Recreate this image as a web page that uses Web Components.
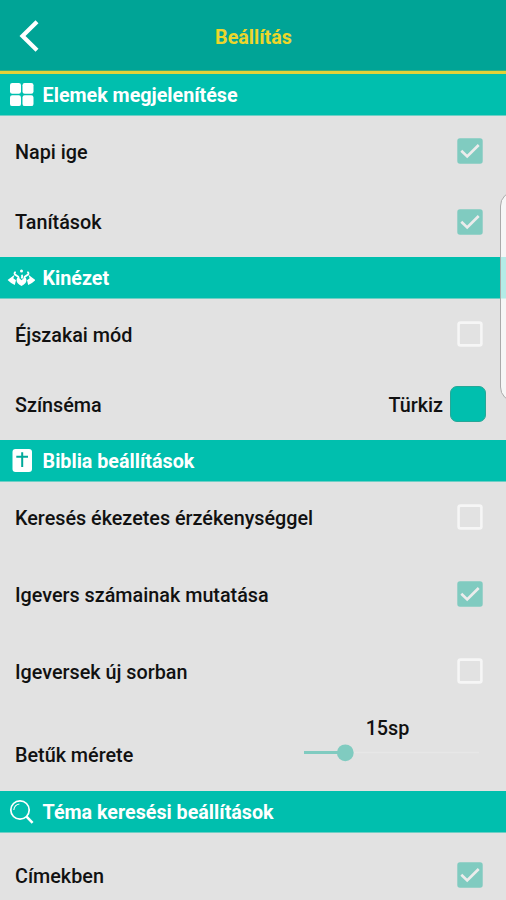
<!DOCTYPE html>
<html lang="hu">
<head>
<meta charset="utf-8">
<title>Beállítás</title>
<style>
html,body{margin:0;height:900px;overflow:hidden;background:#e2e2e2}
</style>
</head>
<body>
<settings-screen></settings-screen>
<script>
function define(name, html) {
  const t = document.createElement('template');
  t.innerHTML = html;
  customElements.define(name, class extends HTMLElement {
    constructor() {
      super();
      this.attachShadow({mode: 'open'}).append(t.content.cloneNode(true));
    }
  });
}

define('app-header', `<style>
:host{display:grid;grid-template-columns:60px 1fr 60px;align-items:center;height:74px;box-sizing:border-box;background:#00a496;border-bottom:3px solid #e2d237;box-shadow:inset 0 -1px #3fae75}
svg{display:block;margin-left:14px}
h1{margin:4px 0 0 1px;font-size:19.7px;line-height:24px;font-weight:700;color:#ecd62b;text-align:center}
</style>
<svg width="30" height="36" viewBox="0 0 30 36"><path d="M23 3.7 8.5 18 23 32.3" fill="none" stroke="#fff" stroke-width="4.2"/></svg>
<h1><slot></slot></h1>`);

define('section-bar', `<style>
:host{display:flex;align-items:center;height:42px;box-sizing:border-box;background:#00bfae;color:#fff;padding-left:7px;gap:7.6px;border-bottom:1px solid #6fcfc5}
.icon{display:flex;width:28px;height:28px;align-items:center;justify-content:center}
h2{margin:0;padding-top:3px;font-size:19.7px;line-height:24px;font-weight:700;white-space:nowrap}
</style>
<span class="icon"><slot name="icon"></slot></span><h2><slot></slot></h2>`);

define('setting-row', `<style>
:host{display:flex;align-items:center;justify-content:space-between;height:70px;box-sizing:border-box;padding:0 23px 0 15px}
:host([tall]){height:84px}
span{font-size:19.77px;line-height:24px;font-weight:500;white-space:nowrap;padding-top:3px}
</style>
<span><slot></slot></span><slot name="control"></slot>`);

define('check-box', `<style>
:host{display:block;width:26px;height:26px}
svg{display:block}
.on{display:none}
:host([checked]) .on{display:block}
:host([checked]) .off{display:none}
</style>
<svg width="26" height="26" viewBox="0 0 26 26">
<rect class="off" x="1.6" y="1.6" width="22.8" height="22.8" rx="2" fill="none" stroke="#f6f6f6" stroke-width="2.6"/>
<g class="on"><rect x=".3" y=".3" width="25.4" height="25.4" rx="2.6" fill="#80cbc0"/><path d="M4.3 12.8 10.2 18.4 21.7 7" fill="none" stroke="#ececec" stroke-width="2.7"/></g>
</svg>`);

define('color-choice', `<style>
:host{display:flex;align-items:center;gap:7px;margin-right:-3px;font-size:19.77px;line-height:24px;font-weight:500}
i{width:36px;height:36px;box-sizing:border-box;border-radius:7px;background:#00bfae;border:1px solid #27a797;position:relative;top:-1px}
b{font-weight:500;padding-top:2px}
</style><b><slot></slot></b><i></i>`);

define('size-slider', `<style>
:host{display:flex;height:85px;box-sizing:border-box;padding:0 23px 0 15px;justify-content:space-between;font-size:19.77px;line-height:24px;font-weight:500}
.label{padding-top:38px}
.control{display:flex;flex-direction:column;width:179px;padding-top:11px}
.value{width:167px;text-align:center}
svg{display:block;margin-top:2px}
</style>
<span class="label"><slot></slot></span>
<div class="control"><span class="value"><slot name="value"></slot></span>
<svg width="179" height="20" viewBox="0 0 179 20"><path d="M41 9.5H175" stroke="#e7e7e7" stroke-width="1.5"/><path d="M0 9.5H41" stroke="#80cbc0" stroke-width="3"/><circle cx="41.3" cy="9.8" r="8.4" fill="#80cbc0"/></svg></div>`);

define('edge-panel', `<style>
:host{position:absolute;left:500px;top:191px;width:30px;height:211px;box-sizing:border-box;border:1.4px solid #aaa;border-radius:17px;background:rgba(255,255,255,.7)}
</style>`);

define('settings-screen', `<style>
:host{display:block;position:relative;width:506px;height:900px;overflow:hidden;background:#e2e2e2;color:#111;font-family:Roboto,sans-serif}
svg{display:block}
main{display:flex;flex-direction:column}
.group{display:flex;flex-direction:column}
</style>
<app-header>Beállítás</app-header>
<main>
<section-bar><svg slot="icon" width="28" height="28" viewBox="0 0 28 28" fill="#fff"><rect x="3" y="2" width="11" height="10.8" rx="2.2"/><rect x="15.5" y="2" width="11" height="10.8" rx="2.2"/><rect x="3" y="14.3" width="11" height="10.8" rx="2.2"/><rect x="15.5" y="14.3" width="11" height="10.8" rx="2.2"/></svg>Elemek megjelenítése</section-bar>
<div class="group">
<setting-row>Napi ige<check-box slot="control" checked></check-box></setting-row>
<setting-row style="height:71px">Tanítások<check-box slot="control" checked></check-box></setting-row>
</div>
<section-bar><svg slot="icon" width="28" height="28" viewBox="0 0 28 28" fill="#fff"><path d="M.6 16 7.6 10.8 6.3 14.2 9 16.2 7.8 21Q4 19.5 .6 16ZM28.4 16 21.4 10.8 22.7 14.2 20 16.2 21.2 21Q25 19.5 28.4 16Z"/><path d="M14.5 22C10.7 20.3 9.3 18 9.5 15.6Q10.5 13.6 12.5 14.2L14.5 16.2 16.5 14.2Q18.5 13.6 19.5 15.6C19.7 18 18.3 20.3 14.5 22Z"/><path d="M8.6 7.8Q5.9 9.8 9.6 11.6T10.2 15.2M20.4 7.8Q23.1 9.8 19.4 11.6T18.8 15.2M14.5 11Q16 12.4 14.5 14.5" fill="none" stroke="#fff" stroke-width="1.8"/><circle cx="14.5" cy="7" r="1.5"/></svg>Kinézet</section-bar>
<div class="group">
<setting-row>Éjszakai mód<check-box slot="control"></check-box></setting-row>
<setting-row style="height:71px">Színséma<color-choice slot="control">Türkiz</color-choice></setting-row>
</div>
<section-bar><svg slot="icon" width="28" height="28" viewBox="0 0 28 28"><rect x="5.5" y="2" width="19.5" height="23" rx="3" fill="#fff"/><path d="M15.2 5.2V20M9.3 9.8H21" stroke="#00a99a" stroke-width="2"/></svg>Biblia beállítások</section-bar>
<div class="group">
<setting-row>Keresés ékezetes érzékenységgel<check-box slot="control"></check-box></setting-row>
<setting-row tall>Igevers számainak mutatása<check-box slot="control" checked></check-box></setting-row>
<setting-row>Igeversek új sorban<check-box slot="control"></check-box></setting-row>
<size-slider>Betűk mérete<span slot="value">15sp</span></size-slider>
</div>
<section-bar><svg slot="icon" width="28" height="28" viewBox="0 0 28 28" fill="none" stroke="#fff"><circle cx="13" cy="12" r="9.2" stroke-width="1.7"/><path d="M6.8 12Q7.4 6.6 12.4 6" stroke-width="1.1"/><path d="M19.3 18.4 25.6 24.8" stroke-width="2.6"/></svg>Téma keresési beállítások</section-bar>
<setting-row tall>Címekben<check-box slot="control" checked></check-box></setting-row>
</main>
<edge-panel></edge-panel>`);
</script>
</body>
</html>
